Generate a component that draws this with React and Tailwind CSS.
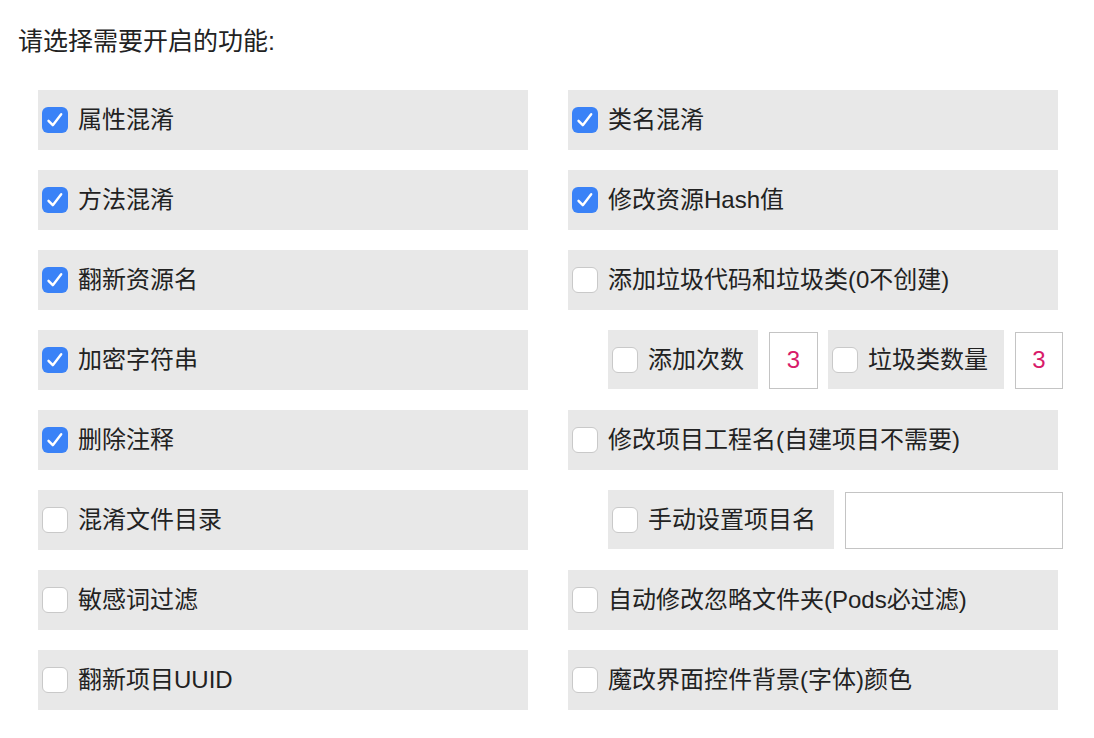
import React from "react";

const FONT = { fontFamily: '"Liberation Sans", "Noto Sans CJK SC", sans-serif' };

function Box({ checked }) {
  if (checked) {
    return (
      <span className="flex h-[26px] w-[26px] shrink-0 items-center justify-center rounded-[6px] bg-[#3a82f7]">
        <svg width="26" height="26" viewBox="0 0 26 26" fill="none">
          <path d="M6.5 13.8 L10.8 18.2 L19.2 7.2" stroke="white" strokeWidth="2.4" strokeLinecap="round" strokeLinejoin="round" />
        </svg>
      </span>
    );
  }
  return <span className="h-[26px] w-[26px] shrink-0 rounded-[6px] border border-[#c9c9c9] bg-white" />;
}

function Row({ label, checked }) {
  return (
    <div className="flex h-[60px] items-center gap-[10px] bg-[#e8e8e8] pl-1 text-[24px] text-[#222]">
      <Box checked={checked} />
      <span>{label}</span>
    </div>
  );
}

function Num({ value, w }) {
  return (
    <div className={`flex h-[57px] shrink-0 ${w} items-center justify-center border border-[#c4c4c4] bg-white text-[24px] text-[#d81b6a]`}>
      {value}
    </div>
  );
}

const left = [
  ["属性混淆", true],
  ["方法混淆", true],
  ["翻新资源名", true],
  ["加密字符串", true],
  ["删除注释", true],
  ["混淆文件目录", false],
  ["敏感词过滤", false],
  ["翻新项目UUID", false],
];

export default function App() {
  return (
    <div className="min-h-[738px] bg-white pl-[20px] pt-[22px] text-[#222]" style={FONT}>
      <h1 className="-ml-[2px] text-[25px] font-normal leading-[38px]">请选择需要开启的功能:</h1>
      <div className="mt-[30px] grid grid-cols-[490px_490px] gap-x-[40px] gap-y-[20px] pl-[18px]">
        {left.map(([label, checked], i) => {
          const right = [
            <Row key="r0" label="类名混淆" checked />,
            <Row key="r1" label="修改资源Hash值" checked />,
            <Row key="r2" label="添加垃圾代码和垃圾类(0不创建)" />,
            <div key="r3" className="flex h-[60px] items-center pl-[40px]">
              <div className="flex h-[59px] w-[150px] shrink-0 self-start items-center gap-[10px] bg-[#e8e8e8] pl-1 text-[24px]">
                <Box />
                <span>添加次数</span>
              </div>
              <div className="ml-[11px] shrink-0"><Num value="3" w="w-[49px]" /></div>
              <div className="ml-[10px] flex h-[59px] w-[176px] shrink-0 self-start items-center gap-[10px] bg-[#e8e8e8] pl-1 text-[24px]">
                <Box />
                <span>垃圾类数量</span>
              </div>
              <div className="ml-[11px] shrink-0"><Num value="3" w="w-[48px]" /></div>
            </div>,
            <Row key="r4" label="修改项目工程名(自建项目不需要)" />,
            <div key="r5" className="flex h-[60px] items-center pl-[40px]">
              <div className="flex h-[59px] w-[226px] shrink-0 self-start items-center gap-[10px] bg-[#e8e8e8] pl-1 text-[24px]">
                <Box />
                <span>手动设置项目名</span>
              </div>
              <div className="ml-[11px] h-[57px] w-[218px] shrink-0 border border-[#c4c4c4] bg-white" />
            </div>,
            <Row key="r6" label="自动修改忽略文件夹(Pods必过滤)" />,
            <Row key="r7" label="魔改界面控件背景(字体)颜色" />,
          ][i];
          return (
            <React.Fragment key={label}>
              <Row label={label} checked={checked} />
              {right}
            </React.Fragment>
          );
        })}
      </div>
    </div>
  );
}
